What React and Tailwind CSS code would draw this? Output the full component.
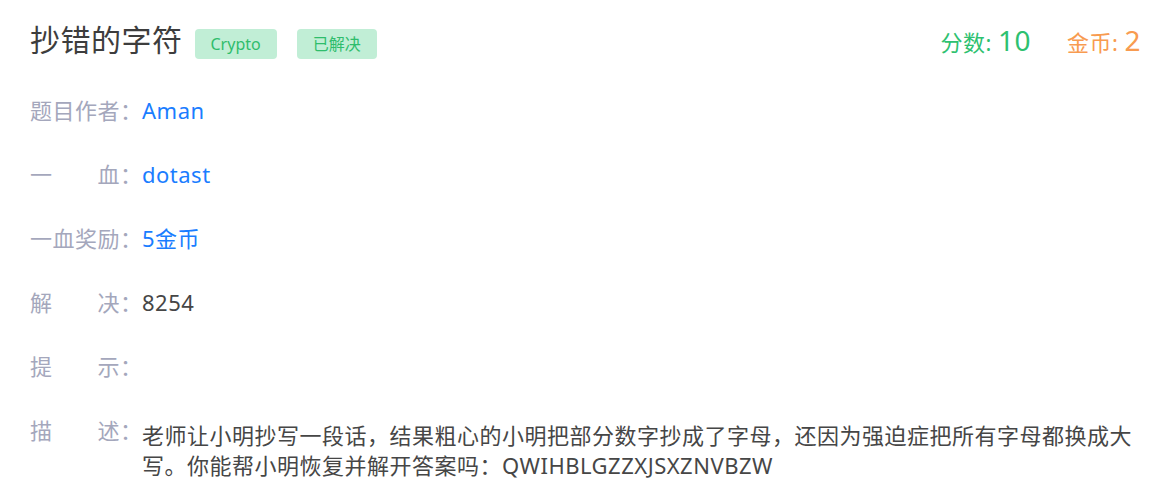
const FONT = "font-['Noto_Sans','Noto_Sans_CJK_SC',sans-serif] tracking-[0.5px] [text-spacing-trim:space-all]";

const rows = [
  { label: '题目作者', value: 'Aman', tone: 'link' },
  { label: '一血', value: 'dotast', tone: 'link' },
  { label: '一血奖励', value: '5金币', tone: 'link' },
  { label: '解决', value: '8254', tone: 'plain' },
  { label: '提示', value: '', tone: 'plain' },
];

const desc =
  '老师让小明抄写一段话，结果粗心的小明把部分数字抄成了字母，还因为强迫症把所有字母都换成大写。你能帮小明恢复并解开答案吗：QWIHBLGZZXJSXZNVBZW';

function Label({ text }) {
  return (
    <div className="flex shrink-0 text-[22px] leading-[30px] text-[#a4a7bc]">
      <span className="w-[90px] text-justify [text-align-last:justify]">{text}</span>
      <span className="w-[22px]">：</span>
    </div>
  );
}

function Tag({ children, className = '' }) {
  return (
    <span
      className={`mt-[8px] h-[30px] w-fit px-[16px] flex items-center rounded-[4px] bg-[#c1eed6] text-[#2fbd6c] text-[16px] tracking-normal ${className}`}
    >
      {children}
    </span>
  );
}

export default function App() {
  return (
    <div className={`${FONT} bg-white w-[1171px] h-[501px] pt-[20px] px-[30px]`}>
      <div className="flex items-center justify-between h-[40px]">
        <div className="flex items-center">
          <h1 className="text-[30px] leading-[40px] text-[#3d3d3d]">抄错的字符</h1>
          <Tag className="ml-[12px] w-[84px] justify-center px-0">Crypto</Tag>
          <Tag className="ml-[20px] w-[79px] justify-center px-0">已解决</Tag>
        </div>
        <div className="flex items-baseline">
          <span className="text-[#2ec170] text-[22px]">分数: </span>
          <span className="text-[#2ec170] text-[28px] ml-[6px]">10</span>
          <span className="text-[#f89b50] text-[22px] ml-[36px]">金币: </span>
          <span className="text-[#f89b50] text-[28px] ml-[6px]">2</span>
        </div>
      </div>

      <div className="mt-[35px] flex flex-col gap-[34px]">
        {rows.map((r) => (
          <div key={r.label} className="flex h-[30px]">
            <Label text={r.label} />
            <span
              className={`text-[22px] leading-[30px] ${
                r.tone === 'link' ? 'text-[#1a7dff]' : 'text-[#464646]'
              }`}
            >
              {r.value}
            </span>
          </div>
        ))}
        <div className="flex">
          <Label text="描述" />
          <p className="mt-[5px] w-[995px] text-[22px] leading-[30px] text-[#464646]">
            {desc}
          </p>
        </div>
      </div>
    </div>
  );
}
